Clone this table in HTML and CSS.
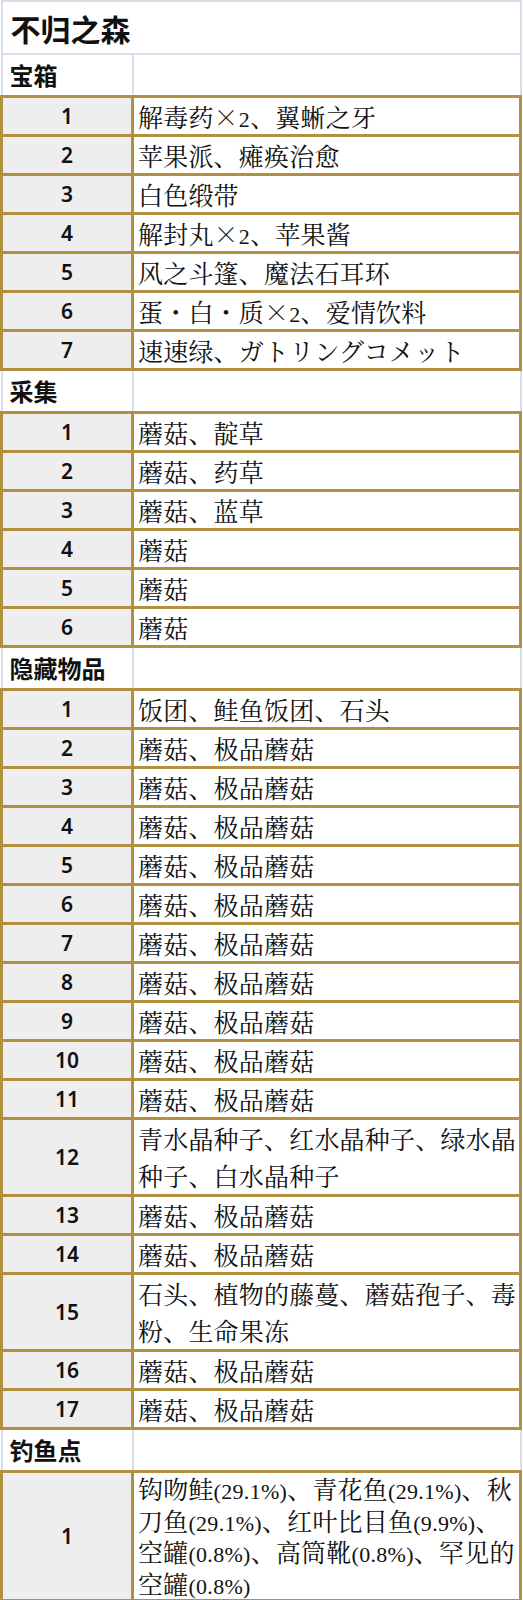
FILE: index.html
```html
<!DOCTYPE html>
<html lang="zh-CN">
<head>
<meta charset="utf-8">
<title>不归之森</title>
<link rel="stylesheet" href="styles.css">
</head>
<body>
<table class="tbl">
  <colgroup><col class="c1"><col class="c2"></colgroup>
  <tr class="title"><td colspan="2">不归之森</td></tr>

  <tr class="sec"><td>宝箱</td><td></td></tr>
  <tr class="row"><td class="num">1</td><td class="txt">解毒药×<span class="lat">2</span>、翼蜥之牙</td></tr>
  <tr class="row"><td class="num">2</td><td class="txt">苹果派、瘫痪治愈</td></tr>
  <tr class="row"><td class="num">3</td><td class="txt">白色缎带</td></tr>
  <tr class="row"><td class="num">4</td><td class="txt">解封丸×<span class="lat">2</span>、苹果酱</td></tr>
  <tr class="row"><td class="num">5</td><td class="txt">风之斗篷、魔法石耳环</td></tr>
  <tr class="row"><td class="num">6</td><td class="txt">蛋・白・质×<span class="lat">2</span>、爱情饮料</td></tr>
  <tr class="row"><td class="num">7</td><td class="txt">速速绿、ガトリングコメット</td></tr>

  <tr class="sec"><td>采集</td><td></td></tr>
  <tr class="row"><td class="num">1</td><td class="txt">蘑菇、靛草</td></tr>
  <tr class="row"><td class="num">2</td><td class="txt">蘑菇、药草</td></tr>
  <tr class="row"><td class="num">3</td><td class="txt">蘑菇、蓝草</td></tr>
  <tr class="row"><td class="num">4</td><td class="txt">蘑菇</td></tr>
  <tr class="row"><td class="num">5</td><td class="txt">蘑菇</td></tr>
  <tr class="row"><td class="num">6</td><td class="txt">蘑菇</td></tr>

  <tr class="sec"><td>隐藏物品</td><td></td></tr>
  <tr class="row"><td class="num">1</td><td class="txt">饭团、鲑鱼饭团、石头</td></tr>
  <tr class="row"><td class="num">2</td><td class="txt">蘑菇、极品蘑菇</td></tr>
  <tr class="row"><td class="num">3</td><td class="txt">蘑菇、极品蘑菇</td></tr>
  <tr class="row"><td class="num">4</td><td class="txt">蘑菇、极品蘑菇</td></tr>
  <tr class="row"><td class="num">5</td><td class="txt">蘑菇、极品蘑菇</td></tr>
  <tr class="row"><td class="num">6</td><td class="txt">蘑菇、极品蘑菇</td></tr>
  <tr class="row"><td class="num">7</td><td class="txt">蘑菇、极品蘑菇</td></tr>
  <tr class="row"><td class="num">8</td><td class="txt">蘑菇、极品蘑菇</td></tr>
  <tr class="row"><td class="num">9</td><td class="txt">蘑菇、极品蘑菇</td></tr>
  <tr class="row"><td class="num">10</td><td class="txt">蘑菇、极品蘑菇</td></tr>
  <tr class="row"><td class="num">11</td><td class="txt">蘑菇、极品蘑菇</td></tr>
  <tr class="row"><td class="num">12</td><td class="txt multi">青水晶种子、红水晶种子、绿水晶种子、白水晶种子</td></tr>
  <tr class="row"><td class="num">13</td><td class="txt">蘑菇、极品蘑菇</td></tr>
  <tr class="row"><td class="num">14</td><td class="txt">蘑菇、极品蘑菇</td></tr>
  <tr class="row"><td class="num">15</td><td class="txt multi">石头、植物的藤蔓、蘑菇孢子、毒粉、生命果冻</td></tr>
  <tr class="row"><td class="num">16</td><td class="txt">蘑菇、极品蘑菇</td></tr>
  <tr class="row"><td class="num">17</td><td class="txt">蘑菇、极品蘑菇</td></tr>

  <tr class="sec"><td>钓鱼点</td><td></td></tr>
  <tr class="row"><td class="num">1</td><td class="txt multi fish">钩吻鲑<span class="lat">(29.1%)</span>、青花鱼<span class="lat">(29.1%)</span>、秋刀鱼<span class="lat">(29.1%)</span>、红叶比目鱼<span class="lat">(9.9%)</span>、空罐<span class="lat">(0.8%)</span>、高筒靴<span class="lat">(0.8%)</span>、罕见的空罐<span class="lat">(0.8%)</span></td></tr>
</table>
</body>
</html>
```

FILE: styles.css
```css
html, body {
  margin: 0;
  padding: 0;
  background: #ffffff;
}

.tbl {
  width: 522px;
  border-collapse: collapse;
  table-layout: fixed;
  color: #111111;
}

.c1 { width: 131px; }

.title td {
  height: 51px;
  padding: 0 8px;
  border: 2px solid #d9dfea;
  font-family: "Noto Sans CJK SC", "Noto Sans", sans-serif;
  font-size: 30px;
  font-weight: 700;
  line-height: 1;
  vertical-align: middle;
}

.sec td {
  height: 40px;
  padding: 0 7px;
  border: 2px solid #d9dfea;
  font-family: "Noto Sans CJK SC", "Noto Sans", sans-serif;
  font-size: 24px;
  font-weight: 700;
  line-height: 1;
  vertical-align: middle;
}

.row td {
  border: 3px solid #b3903f;
  vertical-align: middle;
  padding: 0;
}

.num {
  background: #eeeeee;
  text-align: center;
  font-family: "Noto Sans", "Noto Sans CJK SC", sans-serif;
  font-size: 21px;
  font-weight: 600;
  line-height: 1;
  height: 35px;
}

.txt {
  background: #ffffff;
  padding: 0 3px 0 4px !important;
  font-family: "Noto Serif CJK SC", "Noto Sans CJK SC", serif;
  font-size: 25px;
  letter-spacing: 0.2px;
  line-height: 36px;
}

.txt.multi {
  line-height: 37px;
}

.txt.fish {
  line-height: 31.5px;
}

.lat {
  font-family: "Liberation Serif", serif;
  font-size: 22px;
  letter-spacing: 0.3px;
  line-height: 1;
}
```
